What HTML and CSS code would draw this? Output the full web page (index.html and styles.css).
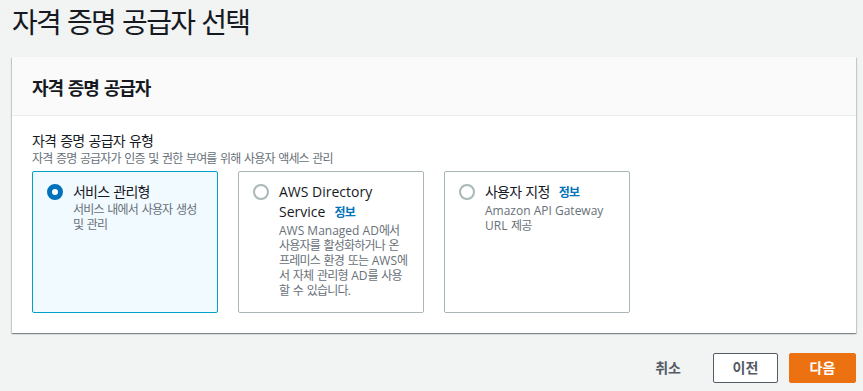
FILE: index.html
```html
<!DOCTYPE html>
<html lang="ko">
<head>
<meta charset="utf-8">
<title>자격 증명 공급자 선택</title>
<link rel="stylesheet" href="styles.css">
</head>
<body>
<div class="page">
  <h1 class="page-title">자격 증명 공급자 선택</h1>
  <section class="card">
    <header class="card-header">
      <h2 class="card-title">자격 증명 공급자</h2>
    </header>
    <div class="card-body">
      <div class="field-label">자격 증명 공급자 유형</div>
      <div class="field-desc">자격 증명 공급자가 인증 및 권한 부여를 위해 사용자 액세스 관리</div>
      <div class="tiles">
        <label class="tile selected">
          <span class="radio checked"></span>
          <span class="tile-text">
            <span class="tile-title">서비스 관리형</span>
            <span class="tile-desc">서비스 내에서 사용자 생성<br>및 관리</span>
          </span>
        </label>
        <label class="tile">
          <span class="radio"></span>
          <span class="tile-text">
            <span class="tile-title"><span class="latin">AWS Directory Service</span> <a class="info">정보</a></span>
            <span class="tile-desc"><span class="latin">AWS Managed AD</span>에서<br>사용자를 활성화하거나 온<br>프레미스 환경 또는 <span class="latin">AWS</span>에<br>서 자체 관리형 <span class="latin">AD</span>를 사용<br>할 수 있습니다.</span>
          </span>
        </label>
        <label class="tile">
          <span class="radio"></span>
          <span class="tile-text">
            <span class="tile-title">사용자 지정 <a class="info">정보</a></span>
            <span class="tile-desc"><span class="latin">Amazon API Gateway</span><br><span class="latin">URL</span> 제공</span>
          </span>
        </label>
      </div>
    </div>
  </section>
  <div class="actions">
    <button class="btn btn-link">취소</button>
    <button class="btn btn-normal">이전</button>
    <button class="btn btn-primary">다음</button>
  </div>
</div>
</body>
</html>
```

FILE: styles.css
```css
* { box-sizing: border-box; }
html, body { margin: 0; padding: 0; }
body {
  background: #f2f3f3;
  font-family: "Open Sans", "Noto Sans CJK KR", sans-serif;
  color: #16191f;
  letter-spacing: -0.05em;
  word-spacing: 0.08em;
}
.latin { letter-spacing: 0; word-spacing: 0; }
.page {
  padding: 4px 7px 0 12px;
}
.page-title {
  margin: 0;
  font-size: 28px;
  line-height: 36px;
  font-weight: 400;
  color: #16191f;
  letter-spacing: -0.06em;
}
.card {
  margin-top: 17px;
  background: #fff;
  box-shadow: 0 1px 1px 0 rgba(0,28,36,.3), 1px 1px 1px 0 rgba(0,28,36,.15), -1px 1px 1px 0 rgba(0,28,36,.15);
}
.card-header {
  background: #fafafa;
  border-bottom: 1px solid #eaeded;
  padding: 19px 20px 15px;
}
.card-title {
  margin: 0;
  font-size: 18px;
  line-height: 24px;
  font-weight: 700;
  letter-spacing: -0.06em;
}
.card-body {
  padding: 15px 20px 20px;
}
.field-label {
  font-size: 14px;
  line-height: 20px;
}
.field-desc {
  font-size: 12px;
  line-height: 16px;
  color: #687078;
  letter-spacing: -0.07em;
}
.tiles {
  margin-top: 4px;
  display: flex;
  gap: 20px;
}
.tile {
  width: 186px;
  height: 142px;
  border: 1px solid #aab7b8;
  border-radius: 2px;
  background: #fff;
  padding: 10px 14px;
  display: flex;
  gap: 10px;
  align-items: flex-start;
}
.tile.selected {
  border-color: #00a1c9;
  background: #f1faff;
}
.radio {
  flex: none;
  width: 16px;
  height: 16px;
  margin-top: 2px;
  border-radius: 50%;
  border: 2px solid #aab7b8;
  background: #fff;
}
.radio.checked {
  border: 5px solid #0073bb;
}
.tile-text {
  display: flex;
  flex-direction: column;
  min-width: 0;
}
.tile-title {
  font-size: 14px;
  line-height: 20px;
  color: #16191f;
}
.info {
  margin-left: 5px;
  font-size: 12px;
  font-weight: 700;
  color: #0073bb;
}
.tile-desc {
  font-size: 12px;
  line-height: 15px;
  color: #687078;
  white-space: nowrap;
}
.actions {
  margin-top: 20px;
  display: flex;
  justify-content: flex-end;
  align-items: center;
  gap: 11px;
}
.btn {
  font-family: inherit;
  font-size: 14px;
  font-weight: 700;
  height: 30px;
  line-height: 20px;
  padding: 4px 0;
  border-radius: 2px;
  text-align: center;
  white-space: nowrap;
  cursor: pointer;
}
.btn-link {
  background: transparent;
  border: 1px solid transparent;
  color: #545b64;
  padding: 4px 20px;
}
.btn-normal {
  background: #fff;
  border: 1px solid #545b64;
  color: #545b64;
  width: 65px;
}
.btn-primary {
  background: #ec7211;
  border: 1px solid #ec7211;
  color: #fff;
  width: 67px;
}
```
